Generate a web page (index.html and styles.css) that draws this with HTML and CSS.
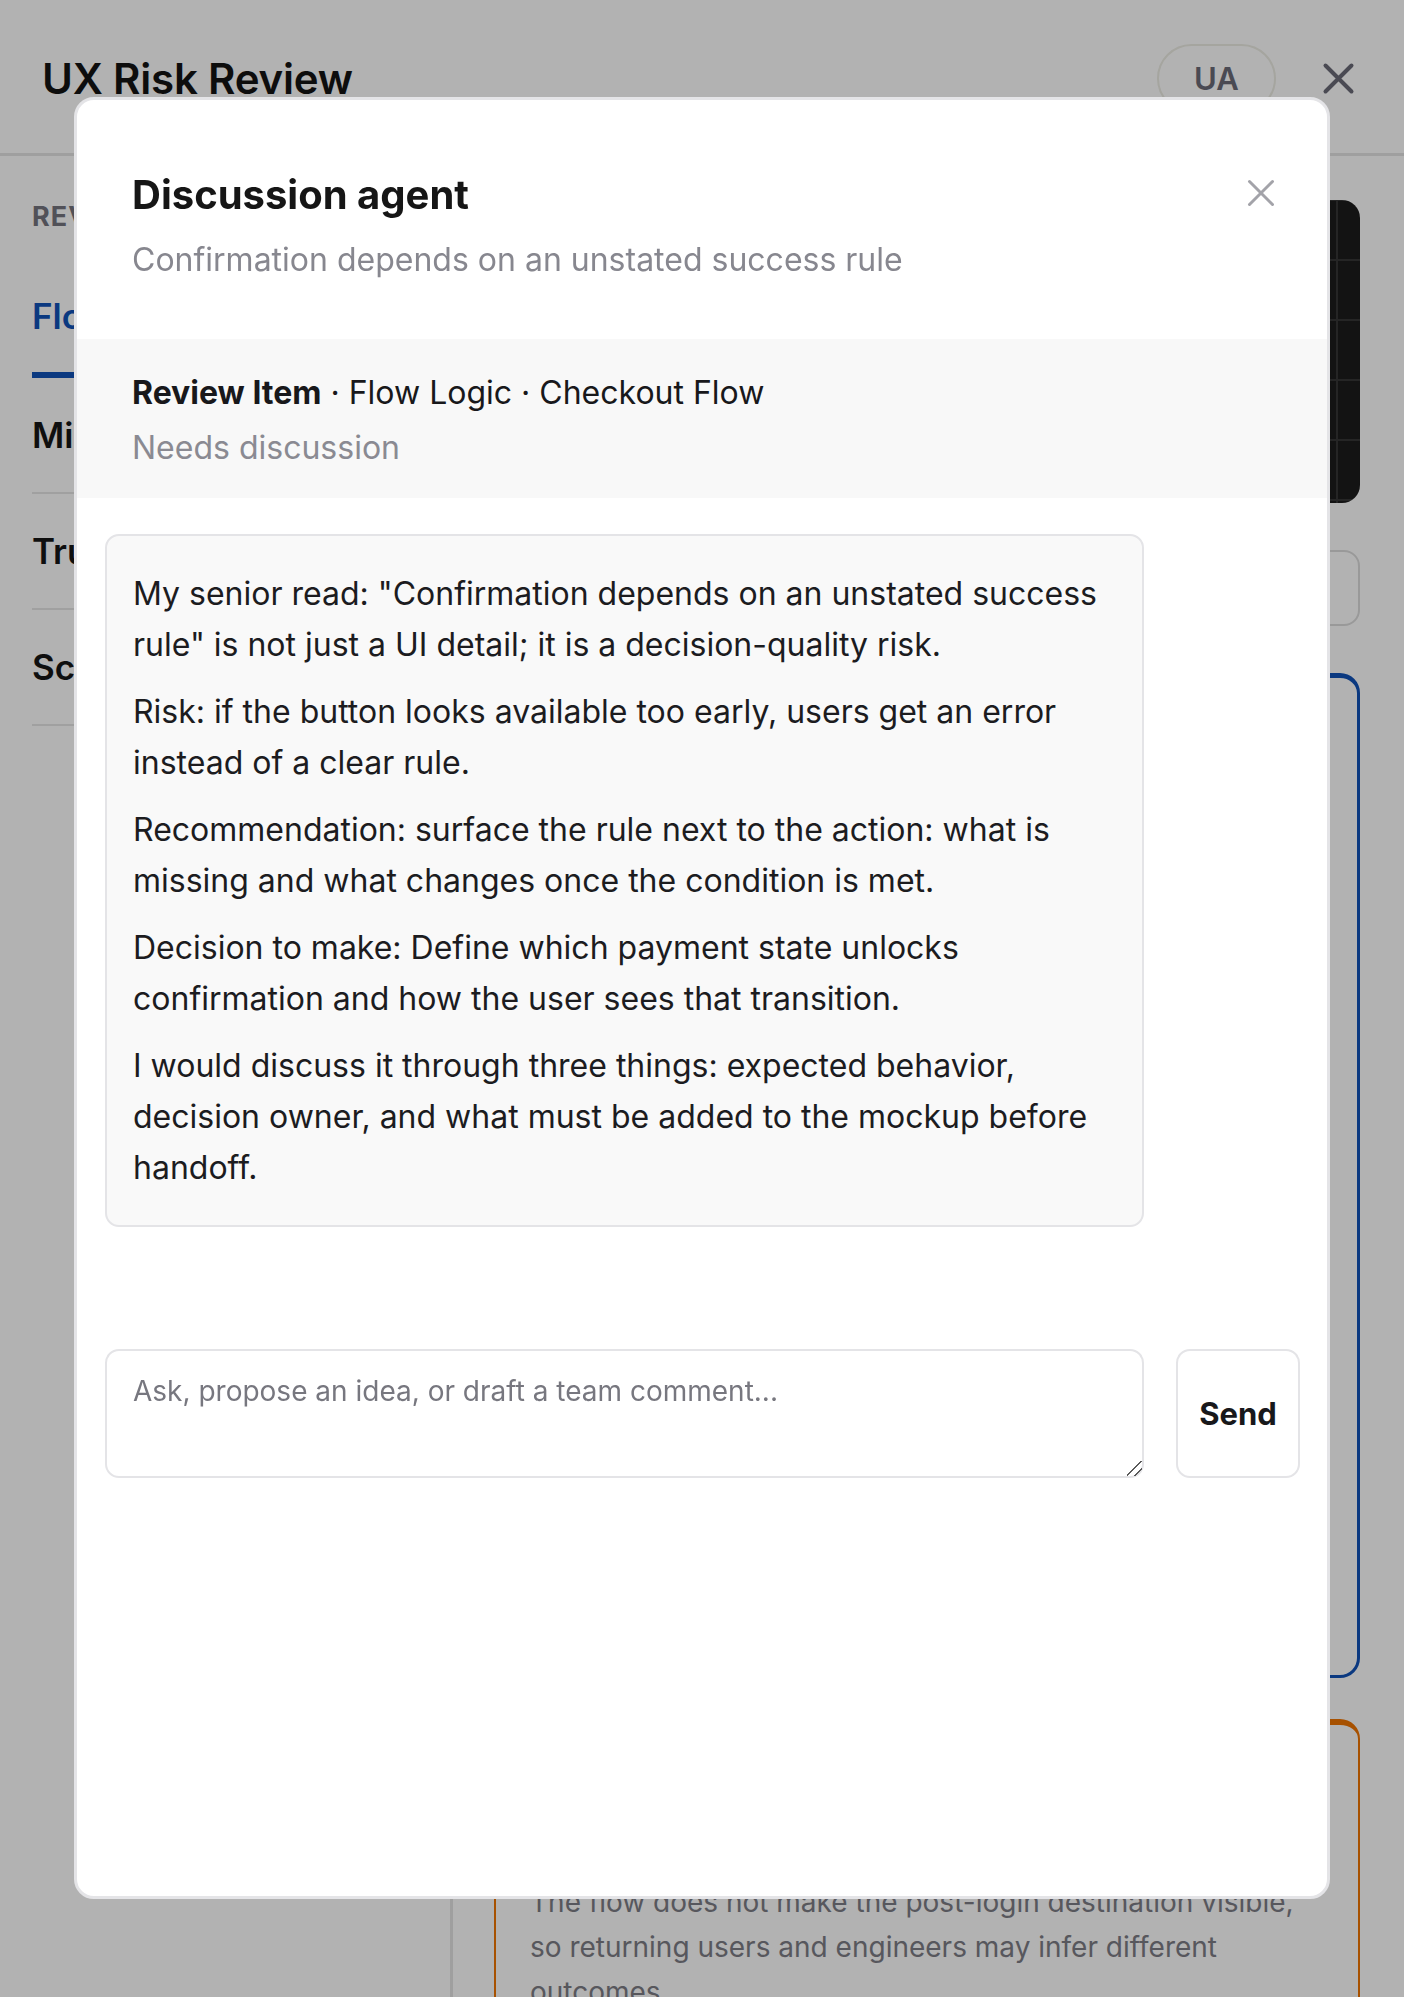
FILE: index.html
```html
<!DOCTYPE html>
<html lang="en">
<head>
<meta charset="utf-8">
<title>UX Risk Review</title>
<link rel="stylesheet" href="styles.css">
</head>
<body>
  <div class="app">
    <header class="topbar">
      <h1>UX Risk Review</h1>
      <div class="topbar-actions">
        <span class="lang">UA</span>
        <button class="icon-btn" type="button" aria-label="Close review">
          <svg width="33" height="33" viewBox="0 0 33 33"><path d="M3.5 3.5L29.5 29.5M29.5 3.5L3.5 29.5" fill="none" stroke="currentColor" stroke-width="4" stroke-linecap="round"/></svg>
        </button>
      </div>
    </header>

    <div class="workspace">
      <aside class="sidebar">
        <p class="sidebar-label">Review areas</p>
        <nav class="area-list">
          <a class="area active">Flow Logic</a>
          <a class="area">Microcopy</a>
          <a class="area">Trust Signals</a>
          <a class="area">Scope</a>
        </nav>
      </aside>

      <main class="board">
        <section class="preview" aria-label="Checkout flow preview"></section>
        <div class="filter"></div>

        <article class="item item-selected"></article>

        <article class="item item-warn">
          <p>The flow does not make the post-login destination visible, so returning users and engineers may infer different outcomes.</p>
        </article>
      </main>
    </div>
  </div>

  <div class="overlay">
    <div class="dialog" role="dialog" aria-label="Discussion agent">
      <div class="dialog-head">
        <div class="dialog-titles">
          <h2>Discussion agent</h2>
          <p class="dialog-sub">Confirmation depends on an unstated success rule</p>
        </div>
        <button class="dialog-close" type="button" aria-label="Close">
          <svg width="28" height="28" viewBox="0 0 28 28"><path d="M2.5 2.5L25.5 25.5M25.5 2.5L2.5 25.5" fill="none" stroke="currentColor" stroke-width="3" stroke-linecap="round"/></svg>
        </button>
      </div>

      <div class="context">
        <p class="context-line"><strong>Review Item</strong> · Flow Logic · Checkout Flow</p>
        <p class="context-status">Needs discussion</p>
      </div>

      <div class="thread">
        <div class="bubble">
          <p>My senior read: "Confirmation depends on an unstated success rule" is not just a UI detail; it is a decision-quality risk.</p>
          <p>Risk: if the button looks available too early, users get an error instead of a clear rule.</p>
          <p>Recommendation: surface the rule next to the action: what is missing and what changes once the condition is met.</p>
          <p>Decision to make: Define which payment state unlocks confirmation and how the user sees that transition.</p>
          <p>I would discuss it through three things: expected behavior, decision owner, and what must be added to the mockup before handoff.</p>
        </div>
      </div>

      <form class="composer">
        <textarea placeholder="Ask, propose an idea, or draft a team comment..."></textarea>
        <button class="send" type="button">Send</button>
      </form>
    </div>
  </div>
</body>
</html>
```

FILE: styles.css
```css
* {
  box-sizing: border-box;
}

html,
body {
  margin: 0;
  height: 100%;
}

body {
  font-family: Inter, "Noto Sans", "Liberation Sans", sans-serif;
  background: #ffffff;
  color: #18181b;
  overflow: hidden;
}

/* ---------- page behind the dialog ---------- */

.topbar {
  height: 156px;
  padding: 4px 42px 0;
  display: flex;
  align-items: center;
  justify-content: space-between;
  border-bottom: 3px solid #e4e4e4;
}

.topbar h1 {
  margin: 0;
  font-size: 42px;
  font-weight: 600;
  letter-spacing: -0.2px;
  color: #141414;
}

.topbar-actions {
  display: flex;
  align-items: center;
  gap: 38px;
}

.lang {
  width: 119px;
  height: 69px;
  border: 2px solid #ececE4;
  border-radius: 40px;
  display: flex;
  align-items: center;
  justify-content: center;
  font-size: 31px;
  font-weight: 600;
  color: #6b6b77;
}

.icon-btn {
  width: 48px;
  height: 48px;
  padding: 0;
  border: 0;
  background: none;
  color: #6b6b77;
  display: flex;
  align-items: center;
  justify-content: center;
}

.workspace {
  display: grid;
  grid-template-columns: 453px 1fr;
}

.sidebar {
  min-height: 1841px;
  padding: 44px 30px 0 32px;
  border-right: 3px solid #e4e4e4;
}

.sidebar-label {
  margin: 0 0 26px;
  font-size: 27px;
  line-height: 34px;
  font-weight: 700;
  letter-spacing: 1px;
  text-transform: uppercase;
  color: #74747e;
}

.area-list {
  display: flex;
  flex-direction: column;
}

.area {
  height: 116px;
  display: flex;
  align-items: center;
  border-bottom: 2px solid #e5e5e5;
  font-size: 35px;
  font-weight: 600;
  color: #161616;
}

.area.active {
  height: 118px;
  color: #1052b8;
  border-bottom: 6px solid #1052b8;
}

.board {
  padding: 44px 44px 0 41px;
  display: flex;
  flex-direction: column;
}

.preview {
  height: 303px;
  border-radius: 18px;
  background-color: #1c1c1c;
  background-image:
    linear-gradient(#353535 2px, transparent 2px),
    linear-gradient(90deg, #353535 2px, transparent 2px);
  background-size: 60px 60px;
  background-position: 2px 59px;
}

.filter {
  margin-top: 47px;
  height: 76px;
  border: 2px solid #dcdcdc;
  border-radius: 16px;
}

.item {
  border-radius: 20px;
}

.item-selected {
  margin-top: 47px;
  min-height: 1005px;
  border: 3px solid #1052b8;
  border-top-width: 5px;
}

.item-warn {
  margin-top: 41px;
  padding: 155px 34px 32px;
  border: 2px solid #f07400;
  border-top-width: 6px;
}

.item p {
  margin: 0;
  font-size: 28px;
  line-height: 45px;
  color: #7d7d86;
}

/* ---------- discussion dialog ---------- */

.overlay {
  position: fixed;
  inset: 0;
  padding: 97px 74px 98px;
  display: flex;
  background: rgba(0, 0, 0, 0.3);
}

.dialog {
  flex: 1;
  display: flex;
  flex-direction: column;
  background: #ffffff;
  border: 3px solid #e4e4e7;
  border-radius: 20px;
  overflow: hidden;
}

.dialog-head {
  padding: 71px 44px 55px 55px;
  display: flex;
  align-items: flex-start;
  justify-content: space-between;
}

.dialog-head h2 {
  margin: 0;
  font-size: 40px;
  line-height: 48px;
  font-weight: 700;
  color: #161616;
}

.dialog-sub {
  margin: 17px 0 0;
  font-size: 32px;
  line-height: 48px;
  color: #87878f;
}

.dialog-close {
  width: 44px;
  height: 44px;
  padding: 0;
  border: 0;
  background: none;
  color: #a3a3a9;
  display: flex;
  align-items: center;
  justify-content: center;
}

.context {
  padding: 30px 55px 26px;
  background: #f8f8f8;
}

.context p {
  margin: 0;
  font-size: 32px;
  line-height: 48px;
}

.context-line {
  color: #18181b;
}

.context-line strong {
  font-weight: 700;
}

.context .context-status {
  margin-top: 7px;
  color: #8a8a92;
}

.thread {
  padding: 36px 27px 0 28px;
}

.bubble {
  max-width: calc(100% - 156px);
  padding: 32px 26px;
  background: #f9f9f9;
  border: 2px solid #e4e4e7;
  border-radius: 14px;
}

.bubble p {
  margin: 0 0 16px;
  font-size: 32px;
  line-height: 51px;
  color: #1c1c1f;
}

.bubble p:last-child {
  margin-bottom: 0;
}

.composer {
  margin: 122px 0 0;
  padding: 0 27px 0 28px;
  display: grid;
  grid-template-columns: 1fr 124px;
  gap: 32px;
}

.composer textarea {
  height: 129px;
  padding: 19px 26px;
  border: 2px solid #e4e4e7;
  border-radius: 14px;
  font-family: inherit;
  font-size: 28px;
  line-height: 42px;
  color: #18181b;
  background: #ffffff;
  outline: none;
  resize: vertical;
}

.composer textarea::placeholder {
  color: #77777f;
}

/* larger drag grip in the bottom-right corner of the comment box */
.composer textarea::-webkit-scrollbar {
  width: 22px;
  height: 22px;
}

.composer textarea::-webkit-resizer {
  background:
    linear-gradient(135deg, transparent 46%, #5a5a5a 46%, #5a5a5a 53%, transparent 53%, transparent 72%, #5a5a5a 72%, #5a5a5a 79%, transparent 79%);
}

.send {
  height: 129px;
  border: 2px solid #e4e4e7;
  border-radius: 14px;
  background: #ffffff;
  font-family: inherit;
  font-size: 31px;
  font-weight: 700;
  color: #18181b;
}
```
